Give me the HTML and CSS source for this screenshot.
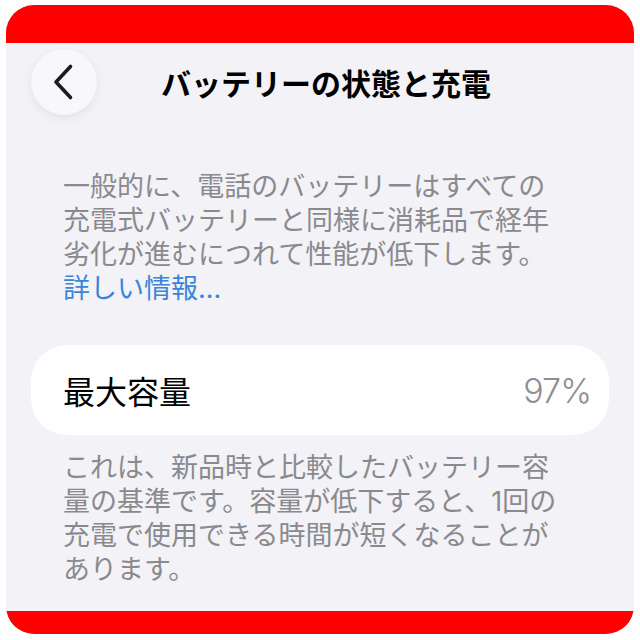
FILE: index.html
```html
<!DOCTYPE html>
<html lang="ja">
<head>
<meta charset="utf-8">
<link rel="stylesheet" href="styles.css">
</head>
<body>
<div class="frame">
  <div class="bar-top"></div>
  <div class="header">
    <div class="back">
      <svg width="66" height="66" viewBox="0 0 66 66"><path d="M39.5 17.5 L25 33 L39.5 48.5" fill="none" stroke="#1c1c1e" stroke-width="3.6" stroke-linecap="round" stroke-linejoin="round"/></svg>
    </div>
    <div class="title">バッテリーの状態と充電</div>
    <div class="spacer"></div>
  </div>
  <div class="content">
    <p class="note first">一般的に、電話のバッテリーはすべての<br>充電式バッテリーと同様に消耗品で経年<br>劣化が進むにつれて性能が低下します。<br><span class="link">詳しい情報...</span></p>
    <div class="card">
      <span class="label">最大容量</span>
      <span class="value">97%</span>
    </div>
    <p class="note second">これは、新品時と比較したバッテリー容<br>量の基準です。容量が低下すると、1回の<br>充電で使用できる時間が短くなることが<br>あります。</p>
  </div>
  <div class="bar-bottom"></div>
</div>
</body>
</html>
```
FILE: styles.css
```css
html, body {
  margin: 0;
  padding: 0;
  background: #ffffff;
}
body {
  font-family: "Inter", "Noto Sans CJK JP", sans-serif;
}
.frame {
  margin: 5px 6px 0 6px;
  width: 628px;
  height: 629px;
  border-radius: 28px;
  overflow: hidden;
  background: #f2f2f7;
  display: flex;
  flex-direction: column;
}
.bar-top {
  height: 38px;
  background: #ff0000;
  flex: none;
}
.header {
  flex: none;
  display: grid;
  grid-template-columns: 66px 1fr 66px;
  align-items: center;
  padding: 6px 25px 0 25px;
  height: 66px;
}
.back {
  width: 66px;
  height: 66px;
  border-radius: 50%;
  background: #f8f8fa;
  box-shadow: 0 3px 10px rgba(0, 0, 0, 0.07);
  display: flex;
}
.title {
  text-align: center;
  font-family: "Noto Sans CJK JP", sans-serif;
  font-weight: 700;
  font-size: 30px;
  line-height: 40px;
  color: #000000;
  padding-left: 12px;
}
.content {
  flex: 1;
  padding: 0 25px;
}
.note {
  margin: 0;
  padding: 0 32px;
  font-size: 27px;
  line-height: 34px;
  color: #8a8a8e;
  white-space: nowrap;
}
.note.first {
  margin-top: 55px;
}
.link {
  color: #3a85d9;
}
.card {
  margin-top: 39px;
  height: 90px;
  border-radius: 36px;
  background: #ffffff;
  display: flex;
  align-items: center;
  justify-content: space-between;
  padding: 0 18px 0 32px;
}
.label {
  font-family: "Noto Sans CJK JP", sans-serif;
  font-size: 32px;
  color: #000000;
}
.value {
  font-family: "Inter", sans-serif;
  font-weight: 300;
  font-size: 34px;
  letter-spacing: -1px;
  color: #8e8e93;
}
.note.second {
  margin-top: 16px;
}
.bar-bottom {
  flex: none;
  height: 23px;
  background: #ff0000;
}
```
